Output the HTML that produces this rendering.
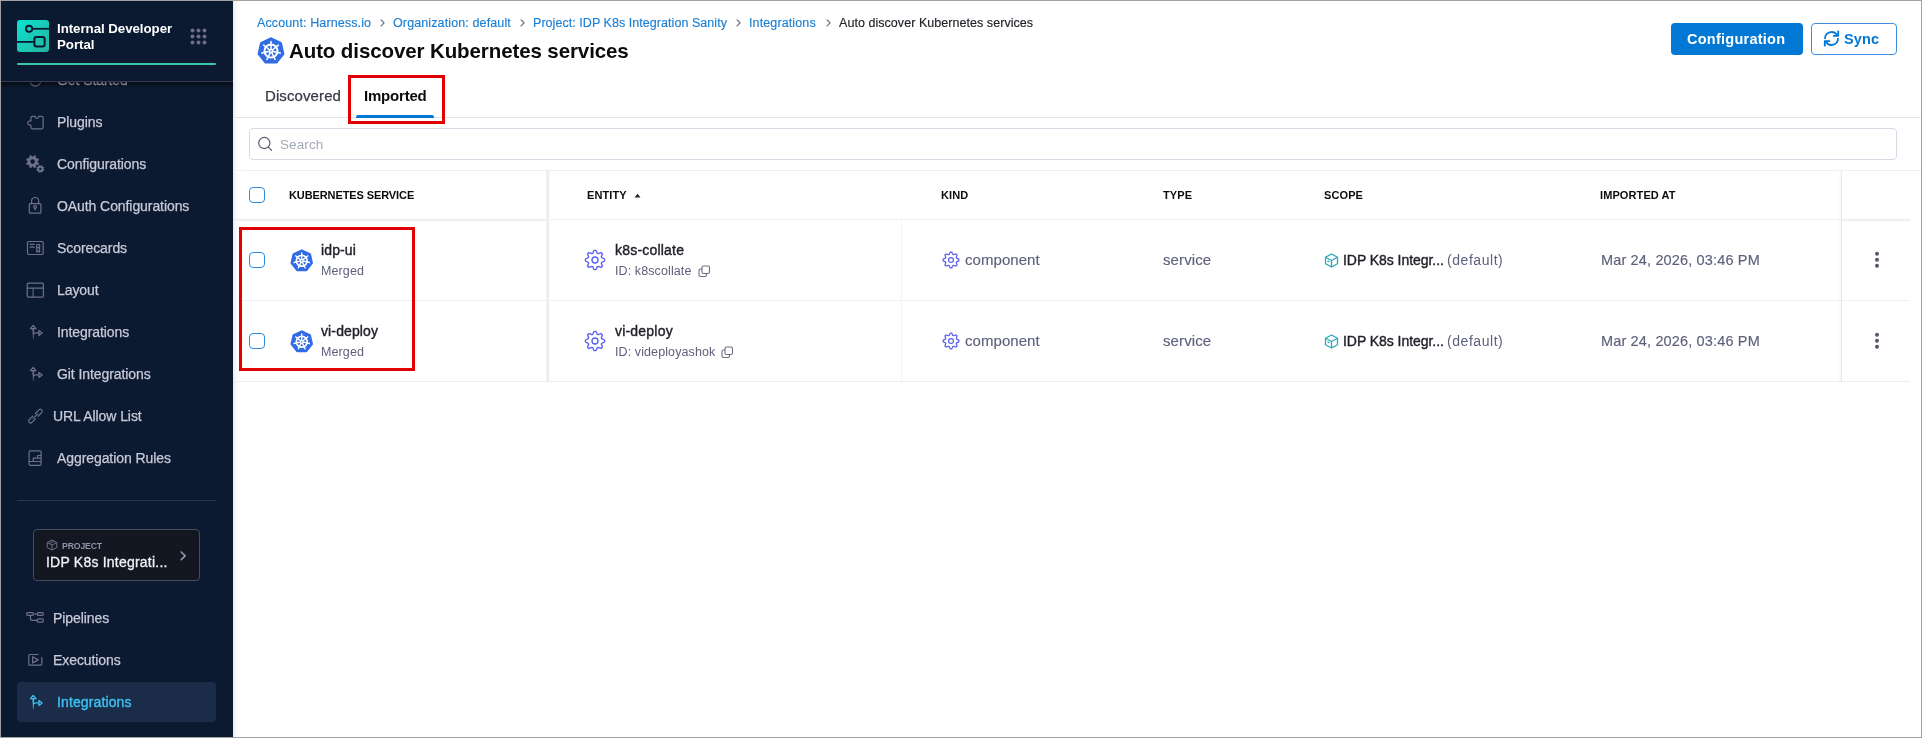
<!DOCTYPE html><html><head><meta charset="utf-8"><style>
html,body{margin:0;padding:0}
body{width:1922px;height:738px;overflow:hidden;position:relative;background:#fff;font-family:"Liberation Sans",sans-serif}
.t{position:absolute;white-space:nowrap;will-change:transform}
</style></head><body>
<div style="position:absolute;left:1px;top:1px;width:232px;height:736px;background:#0c1a31"></div>
<div style="position:absolute;left:233px;top:1px;width:8px;height:736px;background:linear-gradient(to right,#e9e9ee,#f7f7f9 30%,#fcfcfd 70%,#ffffff)"></div>
<div class="t" style="left:57.30px;top:70px;line-height:20px;font-size:14px;font-weight:400;color:#c9cad8;letter-spacing:-0.08px;-webkit-text-stroke:0.25px #c9cad8;">Get Started</div>
<svg style="position:absolute;left:0;top:0" width="60" height="100" fill="none"><circle cx="35.35" cy="80.7" r="5.4" stroke="#6e7089" stroke-width="1.2"/></svg>
<div style="position:absolute;left:1px;top:1px;width:232px;height:80px;background:#0c1a31"></div>
<div style="position:absolute;left:1px;top:81px;width:232px;height:1px;background:#383b4e"></div>
<div style="position:absolute;left:1px;top:82px;width:232px;height:6px;background:linear-gradient(to bottom,rgba(0,0,0,0.55),rgba(0,0,0,0))"></div>
<svg style="position:absolute;left:17px;top:20px;" width="32" height="32" viewBox="0 0 32 32" fill="none"><defs><linearGradient id="lg" x1="0" y1="0" x2="1" y2="1"><stop offset="0" stop-color="#0ce3d3"/><stop offset="1" stop-color="#25b39d"/></linearGradient></defs>
<rect x="0" y="0" width="32" height="32" rx="3" fill="url(#lg)"/>
<circle cx="12.1" cy="8.8" r="3.1" stroke="#0b1a33" stroke-width="2"/>
<path d="M15.2 8.8H32" stroke="#0b1a33" stroke-width="1.8"/>
<rect x="17.4" y="16.9" width="10.2" height="9.6" rx="2" stroke="#0b1a33" stroke-width="2"/>
<path d="M0 21.9H17.4" stroke="#0b1a33" stroke-width="1.8"/></svg>
<div class="t" style="left:57.00px;top:19px;line-height:19px;font-size:13.3px;font-weight:700;color:#ffffff;letter-spacing:-0.05px;">Internal Developer</div>
<div class="t" style="left:57.00px;top:35px;line-height:19px;font-size:13.3px;font-weight:700;color:#ffffff;letter-spacing:-0.05px;">Portal</div>
<svg style="position:absolute;left:189.5px;top:28.3px;" width="17" height="17" viewBox="0 0 17 17" fill="none"><circle cx="2.5" cy="2.5" r="2" fill="#6c6e86"/><circle cx="2.5" cy="8.5" r="2" fill="#6c6e86"/><circle cx="2.5" cy="14.5" r="2" fill="#6c6e86"/><circle cx="8.5" cy="2.5" r="2" fill="#6c6e86"/><circle cx="8.5" cy="8.5" r="2" fill="#6c6e86"/><circle cx="8.5" cy="14.5" r="2" fill="#6c6e86"/><circle cx="14.5" cy="2.5" r="2" fill="#6c6e86"/><circle cx="14.5" cy="8.5" r="2" fill="#6c6e86"/><circle cx="14.5" cy="14.5" r="2" fill="#6c6e86"/></svg>
<div style="position:absolute;left:17px;top:63px;width:199px;height:2px;background:#3cc4a4;border-radius:1px"></div>
<div class="t" style="left:57.30px;top:112px;line-height:20px;font-size:14px;font-weight:400;color:#c9cad8;letter-spacing:-0.08px;-webkit-text-stroke:0.25px #c9cad8;">Plugins</div>
<div class="t" style="left:57.30px;top:154px;line-height:20px;font-size:14px;font-weight:400;color:#c9cad8;letter-spacing:-0.08px;-webkit-text-stroke:0.25px #c9cad8;">Configurations</div>
<div class="t" style="left:57.30px;top:196px;line-height:20px;font-size:14px;font-weight:400;color:#c9cad8;letter-spacing:-0.08px;-webkit-text-stroke:0.25px #c9cad8;">OAuth Configurations</div>
<div class="t" style="left:57.30px;top:238px;line-height:20px;font-size:14px;font-weight:400;color:#c9cad8;letter-spacing:-0.08px;-webkit-text-stroke:0.25px #c9cad8;">Scorecards</div>
<div class="t" style="left:57.30px;top:280px;line-height:20px;font-size:14px;font-weight:400;color:#c9cad8;letter-spacing:-0.08px;-webkit-text-stroke:0.25px #c9cad8;">Layout</div>
<div class="t" style="left:57.30px;top:322px;line-height:20px;font-size:14px;font-weight:400;color:#c9cad8;letter-spacing:-0.08px;-webkit-text-stroke:0.25px #c9cad8;">Integrations</div>
<div class="t" style="left:57.30px;top:364px;line-height:20px;font-size:14px;font-weight:400;color:#c9cad8;letter-spacing:-0.08px;-webkit-text-stroke:0.25px #c9cad8;">Git Integrations</div>
<div class="t" style="left:53.30px;top:406px;line-height:20px;font-size:14px;font-weight:400;color:#c9cad8;letter-spacing:-0.08px;-webkit-text-stroke:0.25px #c9cad8;">URL Allow List</div>
<div class="t" style="left:57.30px;top:448px;line-height:20px;font-size:14px;font-weight:400;color:#c9cad8;letter-spacing:-0.08px;-webkit-text-stroke:0.25px #c9cad8;">Aggregation Rules</div>
<div style="position:absolute;left:17px;top:682px;width:199px;height:40px;background:#1b2c49;border-radius:4px"></div>
<svg style="position:absolute;left:0;top:0" width="233" height="738" fill="none">
<path d="M32.4 116.4H35A1.8 1.8 0 0 0 38.6 116.4H41.6Q43.1 116.4 43.1 117.9V127.3Q43.1 128.8 41.6 128.8H32.4Q30.9 128.8 30.9 127.3V125A2.2 2.2 0 1 1 30.9 121V117.9Q30.9 116.4 32.4 116.4Z" stroke="#6e7089" stroke-width="1.2" stroke-linecap="round" stroke-linejoin="round"/>
<path d="M32.92 156.71L34.18 155.19A6.6 6.6 0 0 1 36.02 155.95L35.83 157.91A4.9 4.9 0 0 1 36.29 158.37L38.25 158.18A6.6 6.6 0 0 1 39.01 160.02L37.49 161.28A4.9 4.9 0 0 1 37.49 161.92L39.01 163.18A6.6 6.6 0 0 1 38.25 165.02L36.29 164.83A4.9 4.9 0 0 1 35.83 165.29L36.02 167.25A6.6 6.6 0 0 1 34.18 168.01L32.92 166.49A4.9 4.9 0 0 1 32.28 166.49L31.02 168.01A6.6 6.6 0 0 1 29.18 167.25L29.37 165.29A4.9 4.9 0 0 1 28.91 164.83L26.95 165.02A6.6 6.6 0 0 1 26.19 163.18L27.71 161.92A4.9 4.9 0 0 1 27.71 161.28L26.19 160.02A6.6 6.6 0 0 1 26.95 158.18L28.91 158.37A4.9 4.9 0 0 1 29.37 157.91L29.18 155.95A6.6 6.6 0 0 1 31.02 155.19L32.28 156.71A4.9 4.9 0 0 1 32.92 156.71ZM34.90 161.60A2.3 2.3 0 1 0 30.30 161.60A2.3 2.3 0 1 0 34.90 161.60Z" fill="#6e7089" fill-rule="evenodd"/>
<path d="M40.48 165.91L41.16 164.99A4.0 4.0 0 0 1 42.45 165.53L42.29 166.66A3.0 3.0 0 0 1 42.54 166.91L43.67 166.75A4.0 4.0 0 0 1 44.21 168.04L43.29 168.72A3.0 3.0 0 0 1 43.29 169.08L44.21 169.76A4.0 4.0 0 0 1 43.67 171.05L42.54 170.89A3.0 3.0 0 0 1 42.29 171.14L42.45 172.27A4.0 4.0 0 0 1 41.16 172.81L40.48 171.89A3.0 3.0 0 0 1 40.12 171.89L39.44 172.81A4.0 4.0 0 0 1 38.15 172.27L38.31 171.14A3.0 3.0 0 0 1 38.06 170.89L36.93 171.05A4.0 4.0 0 0 1 36.39 169.76L37.31 169.08A3.0 3.0 0 0 1 37.31 168.72L36.39 168.04A4.0 4.0 0 0 1 36.93 166.75L38.06 166.91A3.0 3.0 0 0 1 38.31 166.66L38.15 165.53A4.0 4.0 0 0 1 39.44 164.99L40.12 165.91A3.0 3.0 0 0 1 40.48 165.91ZM41.50 168.90A1.2 1.2 0 1 0 39.10 168.90A1.2 1.2 0 1 0 41.50 168.90Z" fill="#6e7089" fill-rule="evenodd"/>
<rect x="29.3" y="203.7" width="11.6" height="9.5" rx="1" stroke="#6e7089" stroke-width="1.2" stroke-linecap="round" stroke-linejoin="round"/>
<path d="M31.6 203.7V201.05A3.55 3.55 0 0 1 38.7 201.05V203.7" stroke="#6e7089" stroke-width="1.2" stroke-linecap="round" stroke-linejoin="round"/>
<circle cx="35.1" cy="207" r="1.3" stroke="#6e7089" stroke-width="1.2" stroke-linecap="round" stroke-linejoin="round"/><path d="M35.1 208.3V210" stroke="#6e7089" stroke-width="1.2" stroke-linecap="round" stroke-linejoin="round"/>
<rect x="27.5" y="241.5" width="15.7" height="13" rx="1.2" stroke="#6e7089" stroke-width="1.2" stroke-linecap="round" stroke-linejoin="round"/>
<path d="M30.2 244.4H34.2M30.2 247.2H34.2" stroke="#6e7089" stroke-width="1.2" stroke-linecap="round" stroke-linejoin="round"/>
<circle cx="38.2" cy="246.1" r="1.7" stroke="#6e7089" stroke-width="1.2" stroke-linecap="round" stroke-linejoin="round"/><path d="M36.8 247.6V252.1L38.2 251L39.6 252.1V247.6" stroke="#6e7089" stroke-width="1.2" stroke-linecap="round" stroke-linejoin="round"/>
<rect x="27.2" y="283.1" width="16.2" height="14" rx="1.2" stroke="#6e7089" stroke-width="1.2" stroke-linecap="round" stroke-linejoin="round"/>
<path d="M27.2 288.2H43.4" stroke="#6e7089" stroke-width="1.2" stroke-linecap="round" stroke-linejoin="round"/><path d="M33.1 288.2V297.1" stroke="#6e7089" stroke-width="1"/>
<g transform="translate(0 0)" stroke="#6e7089" stroke-width="1.2" stroke-linejoin="round" stroke-linecap="round"><path d="M33.2 325.3L36.0 328.7H30.4Z"/><path d="M33.6 333.9Q34.3 332.9 36.4 332.9H38.9"/><path d="M38.9 330.4L42.2 332.9L38.9 335.4Z"/></g><path transform="translate(0 0)" d="M32.4 328.7H34.2L33.5 339.3H33.0Z" fill="#6e7089"/>
<g transform="translate(0 42)" stroke="#6e7089" stroke-width="1.2" stroke-linejoin="round" stroke-linecap="round"><path d="M33.2 325.3L36.0 328.7H30.4Z"/><path d="M33.6 333.9Q34.3 332.9 36.4 332.9H38.9"/><path d="M38.9 330.4L42.2 332.9L38.9 335.4Z"/></g><path transform="translate(0 42)" d="M32.4 328.7H34.2L33.5 339.3H33.0Z" fill="#6e7089"/>
<g transform="rotate(-45 35.4 416.15)" stroke="#6e7089" stroke-width="1.2" stroke-linecap="round" stroke-linejoin="round"><path d="M33.6 414.25H28.45A1.9 1.9 0 0 0 28.45 418.05H33.6"/><path d="M37.2 414.25H42.35A1.9 1.9 0 0 1 42.35 418.05H37.2"/><path d="M32.2 416.15H38.6"/></g>
<rect x="29.1" y="450.8" width="12" height="14.5" rx="1.2" stroke="#6e7089" stroke-width="1.2" stroke-linecap="round" stroke-linejoin="round"/>
<path d="M29.1 461.5H41.1M33.3 461.5V458.1H41.1M37.5 458.1V455.5H41.1" stroke="#6e7089" stroke-width="1.2" stroke-linecap="round" stroke-linejoin="round"/>
<rect x="26.6" y="612.7" width="6.8" height="2.6" rx="1" stroke="#6e7089" stroke-width="1.2" stroke-linecap="round" stroke-linejoin="round"/>
<rect x="37.2" y="612.7" width="6.1" height="2.6" rx="1" stroke="#6e7089" stroke-width="1.2" stroke-linecap="round" stroke-linejoin="round"/>
<rect x="37.2" y="618.8" width="6.1" height="3.3" rx="1" stroke="#6e7089" stroke-width="1.2" stroke-linecap="round" stroke-linejoin="round"/>
<path d="M33.4 614H37.2M30.5 615.3V618.5Q30.5 620.4 32.4 620.4H37.2" stroke="#6e7089" stroke-width="1.2" stroke-linecap="round" stroke-linejoin="round"/>
<path d="M38.1 654.5H29.8Q28.8 654.5 28.8 655.5V664.2Q28.8 665.2 29.8 665.2H40.8Q41.8 665.2 41.8 664.2V657.7" stroke="#6e7089" stroke-width="1.2" stroke-linecap="round" stroke-linejoin="round"/>
<path d="M32.6 656.8V662.9L38.3 659.85Z" stroke="#6e7089" stroke-width="1.2" stroke-linecap="round" stroke-linejoin="round"/>
<g transform="translate(0 370)" stroke="#3dbff0" stroke-width="1.2" stroke-linejoin="round" stroke-linecap="round"><path d="M33.2 325.3L36.0 328.7H30.4Z"/><path d="M33.6 333.9Q34.3 332.9 36.4 332.9H38.9"/><path d="M38.9 330.4L42.2 332.9L38.9 335.4Z"/></g><path transform="translate(0 370)" d="M32.4 328.7H34.2L33.5 339.3H33.0Z" fill="#3dbff0"/>
</svg>
<div style="position:absolute;left:17px;top:500px;width:199px;height:1px;background:#2e3547"></div>
<div style="position:absolute;left:33px;top:529px;width:167px;height:52px;background:#131722;border:1px solid #474b5c;border-radius:4px;box-sizing:border-box"></div>
<svg style="position:absolute;left:46px;top:539px;" width="12" height="12" viewBox="0 0 12 12" fill="none"><g stroke="#6e7089" stroke-width="1" stroke-linejoin="round"><path d="M6 1L10.8 3.5V8.5L6 11L1.2 8.5V3.5Z"/><path d="M1.2 3.5L6 6L10.8 3.5M6 6V11"/><path d="M3 4.6l4.8-2.5"/></g></svg>
<div class="t" style="left:62.00px;top:539px;line-height:14px;font-size:8.7px;font-weight:700;color:#8f92a8;letter-spacing:-0.15px;">PROJECT</div>
<div class="t" style="left:46.00px;top:552px;line-height:20px;font-size:14px;font-weight:400;color:#f2f2f6;letter-spacing:0.22px;-webkit-text-stroke:0.3px #f2f2f6;">IDP K8s Integrati...</div>
<svg style="position:absolute;left:179px;top:550px;" width="8" height="12" viewBox="0 0 8 12" fill="none"><path d="M2.2 2L6.2 5.8L2.2 9.6" stroke="#8f92a8" stroke-width="1.7" stroke-linecap="round" stroke-linejoin="round"/></svg>
<div class="t" style="left:53.30px;top:608px;line-height:20px;font-size:14px;font-weight:400;color:#c9cad8;letter-spacing:-0.08px;-webkit-text-stroke:0.25px #c9cad8;">Pipelines</div>
<div class="t" style="left:53.30px;top:650px;line-height:20px;font-size:14px;font-weight:400;color:#c9cad8;letter-spacing:-0.08px;-webkit-text-stroke:0.25px #c9cad8;">Executions</div>
<div class="t" style="left:57.30px;top:692px;line-height:20px;font-size:14px;font-weight:400;color:#3ec2f2;letter-spacing:0.12px;-webkit-text-stroke:0.35px #3ec2f2;">Integrations</div>
<div class="t" style="left:257.00px;top:14px;line-height:18px;font-size:12.5px;font-weight:400;color:#1a7fd4;letter-spacing:0.12px;-webkit-text-stroke:0.15px #1a7fd4;">Account: Harness.io</div>
<div class="t" style="left:393.00px;top:14px;line-height:18px;font-size:12.5px;font-weight:400;color:#1a7fd4;letter-spacing:0.12px;-webkit-text-stroke:0.15px #1a7fd4;">Organization: default</div>
<div class="t" style="left:533.00px;top:14px;line-height:18px;font-size:12.5px;font-weight:400;color:#1a7fd4;letter-spacing:0.05px;-webkit-text-stroke:0.15px #1a7fd4;">Project: IDP K8s Integration Sanity</div>
<div class="t" style="left:749.00px;top:14px;line-height:18px;font-size:12.5px;font-weight:400;color:#1a7fd4;letter-spacing:0.12px;-webkit-text-stroke:0.15px #1a7fd4;">Integrations</div>
<div class="t" style="left:839.00px;top:14px;line-height:18px;font-size:12.5px;font-weight:400;color:#22222a;letter-spacing:0.05px;-webkit-text-stroke:0.15px #22222a;">Auto discover Kubernetes services</div>
<svg style="position:absolute;left:379.5px;top:18px;" width="6" height="10" viewBox="0 0 6 10" fill="none"><path d="M1.1 1.9L4.1 4.9L1.1 7.9" stroke="#6b6d85" stroke-width="1.25" stroke-linecap="round" stroke-linejoin="round"/></svg>
<svg style="position:absolute;left:519.5px;top:18px;" width="6" height="10" viewBox="0 0 6 10" fill="none"><path d="M1.1 1.9L4.1 4.9L1.1 7.9" stroke="#6b6d85" stroke-width="1.25" stroke-linecap="round" stroke-linejoin="round"/></svg>
<svg style="position:absolute;left:735.5px;top:18px;" width="6" height="10" viewBox="0 0 6 10" fill="none"><path d="M1.1 1.9L4.1 4.9L1.1 7.9" stroke="#6b6d85" stroke-width="1.25" stroke-linecap="round" stroke-linejoin="round"/></svg>
<svg style="position:absolute;left:825.5px;top:18px;" width="6" height="10" viewBox="0 0 6 10" fill="none"><path d="M1.1 1.9L4.1 4.9L1.1 7.9" stroke="#6b6d85" stroke-width="1.25" stroke-linecap="round" stroke-linejoin="round"/></svg>
<svg style="position:absolute;left:257px;top:37px;" width="28" height="28" viewBox="0 0 28 28" fill="none"><polygon points="14.00,1.80 23.54,6.39 25.89,16.71 19.29,24.99 8.71,24.99 2.11,16.71 4.46,6.39" fill="#326ce5" stroke="#326ce5" stroke-width="3" stroke-linejoin="round"/><circle cx="14" cy="14" r="6.5" stroke="#fff" stroke-width="2"/><path d="M14.00 12.80L14.00 4.60" stroke="#fff" stroke-width="1.55" stroke-linecap="round"/><path d="M14.94 13.25L21.35 8.14" stroke="#fff" stroke-width="1.55" stroke-linecap="round"/><path d="M15.17 14.27L23.16 16.09" stroke="#fff" stroke-width="1.55" stroke-linecap="round"/><path d="M14.52 15.08L18.08 22.47" stroke="#fff" stroke-width="1.55" stroke-linecap="round"/><path d="M13.48 15.08L9.92 22.47" stroke="#fff" stroke-width="1.55" stroke-linecap="round"/><path d="M12.83 14.27L4.84 16.09" stroke="#fff" stroke-width="1.55" stroke-linecap="round"/><path d="M13.06 13.25L6.65 8.14" stroke="#fff" stroke-width="1.55" stroke-linecap="round"/><circle cx="14" cy="14" r="2.3" fill="#fff"/><circle cx="14" cy="14" r="0.8" fill="#326ce5"/></svg>
<div class="t" style="left:289.00px;top:37px;line-height:27px;font-size:20.5px;font-weight:700;color:#0b0b0d;letter-spacing:-0.1px;">Auto discover Kubernetes services</div>
<div class="t" style="left:265.00px;top:85px;line-height:21px;font-size:15px;font-weight:400;color:#383946;letter-spacing:0.1px;-webkit-text-stroke:0.25px #383946;">Discovered</div>
<div class="t" style="left:364.00px;top:85px;line-height:21px;font-size:15px;font-weight:700;color:#0b0b0d;letter-spacing:-0.2px;">Imported</div>
<div style="position:absolute;left:234px;top:117px;width:1687px;height:1px;background:#e3e3ea"></div>
<div style="position:absolute;left:356px;top:114.5px;width:78px;height:3px;background:#0278d5;border-radius:2px 2px 0 0"></div>
<div style="position:absolute;left:1671px;top:23px;width:132px;height:32px;background:#0278d5;border-radius:4px"></div>
<div class="t" style="left:1687.00px;top:29px;line-height:20px;font-size:14.5px;font-weight:700;color:#ffffff;letter-spacing:0.25px;">Configuration</div>
<div style="position:absolute;left:1811px;top:23px;width:86px;height:32px;background:#fff;border:1px solid #3c8fdf;border-radius:4px;box-sizing:border-box"></div>
<svg style="position:absolute;left:1823px;top:30px;" width="17" height="17" viewBox="0 0 17 17" fill="none"><g stroke="#0278d5" stroke-width="1.8" stroke-linecap="round" stroke-linejoin="round"><path d="M2 8.3A6.5 6.5 0 0 1 13.8 4.8"/><path d="M15.2 1.3V5.8H10.8"/><path d="M15 8.7A6.5 6.5 0 0 1 3.2 12.2"/><path d="M1.8 15.7V11.2H6.2"/></g></svg>
<div class="t" style="left:1844.00px;top:29px;line-height:20px;font-size:14.5px;font-weight:700;color:#0278d5;letter-spacing:0.1px;">Sync</div>
<div style="position:absolute;left:249px;top:128px;width:1648px;height:32px;background:#fff;border:1px solid #d9dae6;border-radius:4px;box-sizing:border-box"></div>
<svg style="position:absolute;left:257px;top:136px;" width="16" height="16" viewBox="0 0 16 16" fill="none"><circle cx="7.3" cy="7" r="5.6" stroke="#55576a" stroke-width="1.15"/><path d="M11.4 11.1L14.6 14.3" stroke="#55576a" stroke-width="1.15" stroke-linecap="round"/></svg>
<div class="t" style="left:280.00px;top:135px;line-height:19px;font-size:13.5px;font-weight:400;color:#a3abb8;letter-spacing:0.1px;">Search</div>
<div style="position:absolute;left:234px;top:170px;width:1687px;height:1px;background:#efeff6"></div>
<div style="position:absolute;left:234px;top:219px;width:1676px;height:1px;background:#f0f0f8"></div>
<div style="position:absolute;left:234px;top:219px;width:313px;height:1px;background:#ebebf3"></div>
<div style="position:absolute;left:234px;top:220px;width:313px;height:2px;background:linear-gradient(to bottom,#f3f3f5,#fbfbfc)"></div>
<div style="position:absolute;left:234px;top:300px;width:1676px;height:1px;background:#f0f0f8"></div>
<div style="position:absolute;left:234px;top:381px;width:1676px;height:1px;background:#ededf5"></div>
<div style="position:absolute;left:546px;top:171px;width:4px;height:211px;background:linear-gradient(to right,#f6f6f7,#ececee 40%,#f3f3f4 75%,#fdfdfd)"></div>
<div style="position:absolute;left:901px;top:220px;width:1px;height:161px;background:#f3f3f9"></div>
<div style="position:absolute;left:1841px;top:171px;width:1px;height:211px;background:#e8e8ef"></div>
<div style="position:absolute;left:1842px;top:219px;width:68px;height:1px;background:#ebebf3"></div>
<div style="position:absolute;left:1842px;top:220px;width:68px;height:2px;background:linear-gradient(to bottom,#f3f3f5,#fbfbfc)"></div>
<div style="position:absolute;left:1838px;top:171px;width:3px;height:211px;background:linear-gradient(to left,rgba(0,0,0,0.03),rgba(0,0,0,0))"></div>
<div style="position:absolute;left:249px;top:187px;width:16px;height:16px;border:1.5px solid #2e8be0;border-radius:4px;box-sizing:border-box;background:#fff"></div>
<div class="t" style="left:289.00px;top:187px;line-height:16px;font-size:11px;font-weight:700;color:#0b0b0d;letter-spacing:-0.1px;">KUBERNETES SERVICE</div>
<div class="t" style="left:587.00px;top:187px;line-height:16px;font-size:11px;font-weight:700;color:#0b0b0d;letter-spacing:0.1px;">ENTITY</div>
<svg style="position:absolute;left:634px;top:193px;" width="7" height="5" viewBox="0 0 7 5" fill="none"><path d="M0.5 4.5L3.5 0.8L6.5 4.5Z" fill="#22222a"/></svg>
<div class="t" style="left:941.00px;top:187px;line-height:16px;font-size:11px;font-weight:700;color:#0b0b0d;letter-spacing:0.1px;">KIND</div>
<div class="t" style="left:1163.00px;top:187px;line-height:16px;font-size:11px;font-weight:700;color:#0b0b0d;letter-spacing:0.1px;">TYPE</div>
<div class="t" style="left:1324.00px;top:187px;line-height:16px;font-size:11px;font-weight:700;color:#0b0b0d;letter-spacing:0.1px;">SCOPE</div>
<div class="t" style="left:1600.00px;top:187px;line-height:16px;font-size:11px;font-weight:700;color:#0b0b0d;letter-spacing:0.1px;">IMPORTED AT</div>
<div style="position:absolute;left:249px;top:252px;width:16px;height:16px;border:1.5px solid #2e8be0;border-radius:4px;box-sizing:border-box;background:#fff"></div>
<svg style="position:absolute;left:289.5px;top:248.5px;" width="23.5" height="23.5" viewBox="0 0 28 28" fill="none"><polygon points="14.00,1.80 23.54,6.39 25.89,16.71 19.29,24.99 8.71,24.99 2.11,16.71 4.46,6.39" fill="#326ce5" stroke="#326ce5" stroke-width="3" stroke-linejoin="round"/><circle cx="14" cy="14" r="6.5" stroke="#fff" stroke-width="2"/><path d="M14.00 12.80L14.00 4.60" stroke="#fff" stroke-width="1.55" stroke-linecap="round"/><path d="M14.94 13.25L21.35 8.14" stroke="#fff" stroke-width="1.55" stroke-linecap="round"/><path d="M15.17 14.27L23.16 16.09" stroke="#fff" stroke-width="1.55" stroke-linecap="round"/><path d="M14.52 15.08L18.08 22.47" stroke="#fff" stroke-width="1.55" stroke-linecap="round"/><path d="M13.48 15.08L9.92 22.47" stroke="#fff" stroke-width="1.55" stroke-linecap="round"/><path d="M12.83 14.27L4.84 16.09" stroke="#fff" stroke-width="1.55" stroke-linecap="round"/><path d="M13.06 13.25L6.65 8.14" stroke="#fff" stroke-width="1.55" stroke-linecap="round"/><circle cx="14" cy="14" r="2.3" fill="#fff"/><circle cx="14" cy="14" r="0.8" fill="#326ce5"/></svg>
<div class="t" style="left:321.00px;top:240px;line-height:20px;font-size:14px;font-weight:400;color:#1f2029;letter-spacing:0.12px;-webkit-text-stroke:0.4px #1f2029;">idp-ui</div>
<div class="t" style="left:321.00px;top:262px;line-height:18px;font-size:12.5px;font-weight:400;color:#5d5f7c;letter-spacing:0.1px;">Merged</div>
<svg style="position:absolute;left:584px;top:249px;" width="22" height="22" viewBox="0 0 22 22" fill="none"><path d="M8.74 4.27L10.00 1.45A9.6 9.6 0 0 1 12.00 1.45L13.26 4.27A7.1 7.1 0 0 1 14.16 4.64L17.05 3.54A9.6 9.6 0 0 1 18.46 4.95L17.36 7.84A7.1 7.1 0 0 1 17.73 8.74L20.55 10.00A9.6 9.6 0 0 1 20.55 12.00L17.73 13.26A7.1 7.1 0 0 1 17.36 14.16L18.46 17.05A9.6 9.6 0 0 1 17.05 18.46L14.16 17.36A7.1 7.1 0 0 1 13.26 17.73L12.00 20.55A9.6 9.6 0 0 1 10.00 20.55L8.74 17.73A7.1 7.1 0 0 1 7.84 17.36L4.95 18.46A9.6 9.6 0 0 1 3.54 17.05L4.64 14.16A7.1 7.1 0 0 1 4.27 13.26L1.45 12.00A9.6 9.6 0 0 1 1.45 10.00L4.27 8.74A7.1 7.1 0 0 1 4.64 7.84L3.54 4.95A9.6 9.6 0 0 1 4.95 3.54L7.84 4.64A7.1 7.1 0 0 1 8.74 4.27Z" stroke="#5b5ff0" stroke-width="1.35" stroke-linejoin="round"/><circle cx="11" cy="11" r="3.0" stroke="#5b5ff0" stroke-width="1.35"/></svg>
<div class="t" style="left:615.00px;top:240px;line-height:20px;font-size:14px;font-weight:400;color:#1f2029;letter-spacing:0.2px;-webkit-text-stroke:0.4px #1f2029;">k8s-collate</div>
<div class="t" style="left:615.00px;top:262px;line-height:18px;font-size:12.5px;font-weight:400;color:#5d5f7c;letter-spacing:0.1px;">ID: k8scollate</div>
<svg style="position:absolute;left:697.5px;top:265px;" width="13" height="13" viewBox="0 0 13 13" fill="none"><rect x="1" y="4" width="7.5" height="7.5" rx="1.5" stroke="#6b6d85" stroke-width="1.1"/><rect x="4" y="1" width="7.5" height="7.5" rx="1.5" stroke="#6b6d85" stroke-width="1.1" fill="#fff"/></svg>
<svg style="position:absolute;left:942px;top:251px;" width="18" height="18" viewBox="0 0 22 22" fill="none"><path d="M8.74 4.27L10.00 1.45A9.6 9.6 0 0 1 12.00 1.45L13.26 4.27A7.1 7.1 0 0 1 14.16 4.64L17.05 3.54A9.6 9.6 0 0 1 18.46 4.95L17.36 7.84A7.1 7.1 0 0 1 17.73 8.74L20.55 10.00A9.6 9.6 0 0 1 20.55 12.00L17.73 13.26A7.1 7.1 0 0 1 17.36 14.16L18.46 17.05A9.6 9.6 0 0 1 17.05 18.46L14.16 17.36A7.1 7.1 0 0 1 13.26 17.73L12.00 20.55A9.6 9.6 0 0 1 10.00 20.55L8.74 17.73A7.1 7.1 0 0 1 7.84 17.36L4.95 18.46A9.6 9.6 0 0 1 3.54 17.05L4.64 14.16A7.1 7.1 0 0 1 4.27 13.26L1.45 12.00A9.6 9.6 0 0 1 1.45 10.00L4.27 8.74A7.1 7.1 0 0 1 4.64 7.84L3.54 4.95A9.6 9.6 0 0 1 4.95 3.54L7.84 4.64A7.1 7.1 0 0 1 8.74 4.27Z" stroke="#5b5ff0" stroke-width="1.5" stroke-linejoin="round"/><circle cx="11" cy="11" r="3.0" stroke="#5b5ff0" stroke-width="1.5"/></svg>
<div class="t" style="left:965.00px;top:249px;line-height:21px;font-size:15px;font-weight:400;color:#5d5f7c;letter-spacing:0.05px;-webkit-text-stroke:0.15px #5d5f7c;">component</div>
<div class="t" style="left:1163.00px;top:249px;line-height:21px;font-size:15px;font-weight:400;color:#5d5f7c;letter-spacing:0.1px;-webkit-text-stroke:0.15px #5d5f7c;">service</div>
<svg style="position:absolute;left:1324px;top:252.5px;" width="15" height="15" viewBox="0 0 15 15" fill="none"><g stroke="#2aa8b8" stroke-width="1.3" stroke-linejoin="round"><path d="M7.5 1L13.5 4.2V10.8L7.5 14L1.5 10.8V4.2Z"/><path d="M1.5 4.2L7.5 7.5L13.5 4.2M7.5 7.5V14"/><path d="M3.5 7.8L5.5 9"/></g></svg>
<div class="t" style="left:1343.00px;top:250px;line-height:20px;font-size:14px;font-weight:400;color:#1f2029;letter-spacing:-0.05px;-webkit-text-stroke:0.4px #1f2029;">IDP K8s Integr...</div>
<div class="t" style="left:1446.50px;top:250px;line-height:20px;font-size:14px;font-weight:400;color:#5d5f7c;letter-spacing:0.55px;">(default)</div>
<div class="t" style="left:1600.50px;top:250px;line-height:20px;font-size:14.5px;font-weight:400;color:#5d5f7c;letter-spacing:0.15px;-webkit-text-stroke:0.15px #5d5f7c;">Mar 24, 2026, 03:46 PM</div>
<svg style="position:absolute;left:1873px;top:251px;" width="8" height="18" viewBox="0 0 8 18" fill="none"><circle cx="4" cy="2.8" r="2" fill="#55576f"/><circle cx="4" cy="8.8" r="2" fill="#55576f"/><circle cx="4" cy="14.8" r="2" fill="#55576f"/></svg>
<div style="position:absolute;left:249px;top:333px;width:16px;height:16px;border:1.5px solid #2e8be0;border-radius:4px;box-sizing:border-box;background:#fff"></div>
<svg style="position:absolute;left:289.5px;top:329.5px;" width="23.5" height="23.5" viewBox="0 0 28 28" fill="none"><polygon points="14.00,1.80 23.54,6.39 25.89,16.71 19.29,24.99 8.71,24.99 2.11,16.71 4.46,6.39" fill="#326ce5" stroke="#326ce5" stroke-width="3" stroke-linejoin="round"/><circle cx="14" cy="14" r="6.5" stroke="#fff" stroke-width="2"/><path d="M14.00 12.80L14.00 4.60" stroke="#fff" stroke-width="1.55" stroke-linecap="round"/><path d="M14.94 13.25L21.35 8.14" stroke="#fff" stroke-width="1.55" stroke-linecap="round"/><path d="M15.17 14.27L23.16 16.09" stroke="#fff" stroke-width="1.55" stroke-linecap="round"/><path d="M14.52 15.08L18.08 22.47" stroke="#fff" stroke-width="1.55" stroke-linecap="round"/><path d="M13.48 15.08L9.92 22.47" stroke="#fff" stroke-width="1.55" stroke-linecap="round"/><path d="M12.83 14.27L4.84 16.09" stroke="#fff" stroke-width="1.55" stroke-linecap="round"/><path d="M13.06 13.25L6.65 8.14" stroke="#fff" stroke-width="1.55" stroke-linecap="round"/><circle cx="14" cy="14" r="2.3" fill="#fff"/><circle cx="14" cy="14" r="0.8" fill="#326ce5"/></svg>
<div class="t" style="left:321.00px;top:321px;line-height:20px;font-size:14px;font-weight:400;color:#1f2029;letter-spacing:0.12px;-webkit-text-stroke:0.4px #1f2029;">vi-deploy</div>
<div class="t" style="left:321.00px;top:343px;line-height:18px;font-size:12.5px;font-weight:400;color:#5d5f7c;letter-spacing:0.1px;">Merged</div>
<svg style="position:absolute;left:584px;top:330px;" width="22" height="22" viewBox="0 0 22 22" fill="none"><path d="M8.74 4.27L10.00 1.45A9.6 9.6 0 0 1 12.00 1.45L13.26 4.27A7.1 7.1 0 0 1 14.16 4.64L17.05 3.54A9.6 9.6 0 0 1 18.46 4.95L17.36 7.84A7.1 7.1 0 0 1 17.73 8.74L20.55 10.00A9.6 9.6 0 0 1 20.55 12.00L17.73 13.26A7.1 7.1 0 0 1 17.36 14.16L18.46 17.05A9.6 9.6 0 0 1 17.05 18.46L14.16 17.36A7.1 7.1 0 0 1 13.26 17.73L12.00 20.55A9.6 9.6 0 0 1 10.00 20.55L8.74 17.73A7.1 7.1 0 0 1 7.84 17.36L4.95 18.46A9.6 9.6 0 0 1 3.54 17.05L4.64 14.16A7.1 7.1 0 0 1 4.27 13.26L1.45 12.00A9.6 9.6 0 0 1 1.45 10.00L4.27 8.74A7.1 7.1 0 0 1 4.64 7.84L3.54 4.95A9.6 9.6 0 0 1 4.95 3.54L7.84 4.64A7.1 7.1 0 0 1 8.74 4.27Z" stroke="#5b5ff0" stroke-width="1.35" stroke-linejoin="round"/><circle cx="11" cy="11" r="3.0" stroke="#5b5ff0" stroke-width="1.35"/></svg>
<div class="t" style="left:615.00px;top:321px;line-height:20px;font-size:14px;font-weight:400;color:#1f2029;letter-spacing:0.2px;-webkit-text-stroke:0.4px #1f2029;">vi-deploy</div>
<div class="t" style="left:615.00px;top:343px;line-height:18px;font-size:12.5px;font-weight:400;color:#5d5f7c;letter-spacing:0.1px;">ID: videployashok</div>
<svg style="position:absolute;left:720.5px;top:346px;" width="13" height="13" viewBox="0 0 13 13" fill="none"><rect x="1" y="4" width="7.5" height="7.5" rx="1.5" stroke="#6b6d85" stroke-width="1.1"/><rect x="4" y="1" width="7.5" height="7.5" rx="1.5" stroke="#6b6d85" stroke-width="1.1" fill="#fff"/></svg>
<svg style="position:absolute;left:942px;top:332px;" width="18" height="18" viewBox="0 0 22 22" fill="none"><path d="M8.74 4.27L10.00 1.45A9.6 9.6 0 0 1 12.00 1.45L13.26 4.27A7.1 7.1 0 0 1 14.16 4.64L17.05 3.54A9.6 9.6 0 0 1 18.46 4.95L17.36 7.84A7.1 7.1 0 0 1 17.73 8.74L20.55 10.00A9.6 9.6 0 0 1 20.55 12.00L17.73 13.26A7.1 7.1 0 0 1 17.36 14.16L18.46 17.05A9.6 9.6 0 0 1 17.05 18.46L14.16 17.36A7.1 7.1 0 0 1 13.26 17.73L12.00 20.55A9.6 9.6 0 0 1 10.00 20.55L8.74 17.73A7.1 7.1 0 0 1 7.84 17.36L4.95 18.46A9.6 9.6 0 0 1 3.54 17.05L4.64 14.16A7.1 7.1 0 0 1 4.27 13.26L1.45 12.00A9.6 9.6 0 0 1 1.45 10.00L4.27 8.74A7.1 7.1 0 0 1 4.64 7.84L3.54 4.95A9.6 9.6 0 0 1 4.95 3.54L7.84 4.64A7.1 7.1 0 0 1 8.74 4.27Z" stroke="#5b5ff0" stroke-width="1.5" stroke-linejoin="round"/><circle cx="11" cy="11" r="3.0" stroke="#5b5ff0" stroke-width="1.5"/></svg>
<div class="t" style="left:965.00px;top:330px;line-height:21px;font-size:15px;font-weight:400;color:#5d5f7c;letter-spacing:0.05px;-webkit-text-stroke:0.15px #5d5f7c;">component</div>
<div class="t" style="left:1163.00px;top:330px;line-height:21px;font-size:15px;font-weight:400;color:#5d5f7c;letter-spacing:0.1px;-webkit-text-stroke:0.15px #5d5f7c;">service</div>
<svg style="position:absolute;left:1324px;top:333.5px;" width="15" height="15" viewBox="0 0 15 15" fill="none"><g stroke="#2aa8b8" stroke-width="1.3" stroke-linejoin="round"><path d="M7.5 1L13.5 4.2V10.8L7.5 14L1.5 10.8V4.2Z"/><path d="M1.5 4.2L7.5 7.5L13.5 4.2M7.5 7.5V14"/><path d="M3.5 7.8L5.5 9"/></g></svg>
<div class="t" style="left:1343.00px;top:331px;line-height:20px;font-size:14px;font-weight:400;color:#1f2029;letter-spacing:-0.05px;-webkit-text-stroke:0.4px #1f2029;">IDP K8s Integr...</div>
<div class="t" style="left:1446.50px;top:331px;line-height:20px;font-size:14px;font-weight:400;color:#5d5f7c;letter-spacing:0.55px;">(default)</div>
<div class="t" style="left:1600.50px;top:331px;line-height:20px;font-size:14.5px;font-weight:400;color:#5d5f7c;letter-spacing:0.15px;-webkit-text-stroke:0.15px #5d5f7c;">Mar 24, 2026, 03:46 PM</div>
<svg style="position:absolute;left:1873px;top:332px;" width="8" height="18" viewBox="0 0 8 18" fill="none"><circle cx="4" cy="2.8" r="2" fill="#55576f"/><circle cx="4" cy="8.8" r="2" fill="#55576f"/><circle cx="4" cy="14.8" r="2" fill="#55576f"/></svg>
<div style="position:absolute;left:348px;top:75px;width:97px;height:49px;border:3px solid #e30000;box-sizing:border-box"></div>
<div style="position:absolute;left:239px;top:227px;width:176px;height:144px;border:3px solid #e30000;box-sizing:border-box"></div>
<div style="position:absolute;left:0px;top:0px;width:1922px;height:738px;border:1px solid #a0a0a0;box-sizing:border-box"></div>
</body></html>
